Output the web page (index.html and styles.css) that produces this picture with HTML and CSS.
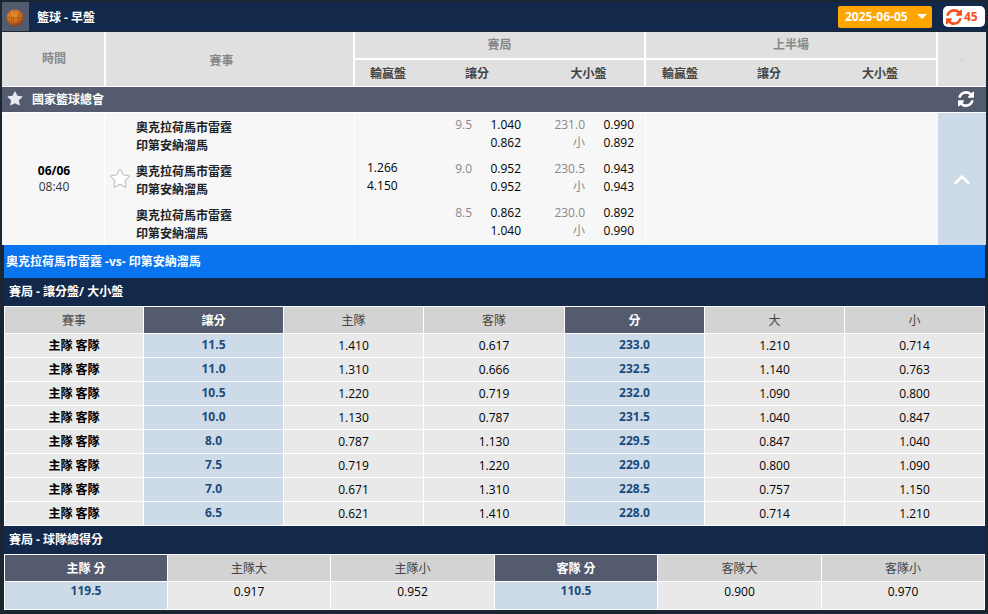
FILE: index.html
```html
<!DOCTYPE html>
<html lang="zh-Hant">
<head>
<meta charset="utf-8">
<title>籃球 - 早盤</title>
<link rel="stylesheet" href="styles.css">
</head>
<body>
<svg class="defs" width="0" height="0">
  <symbol id="refresh" viewBox="0 0 1536 1536"><path fill="currentColor" d="M1511 928q0 5-1 7-64 268-268 434.500t-478 166.500q-146 0-282.500-55t-243.500-157l-129 129q-19 19-45 19t-45-19-19-45v-448q0-26 19-45t45-19h448q26 0 45 19t19 45-19 45l-137 137q71 66 161 102t187 36q134 0 250-65t186-179q11-17 53-117 8-23 30-23h192q13 0 22.500 9.500t9.500 22.500zm25-800v448q0 26-19 45t-45 19h-448q-26 0-45-19t-19-45 19-45l138-138q-148-137-349-137-134 0-250 65t-186 179q-11 17-53 117-8 23-30 23h-199q-13 0-22.500-9.500t-9.500-22.500v-7q65-268 270-434.500t480-166.500q146 0 284 55.500t245 156.500l130-129q19-19 45-19t45 19 19 45z"/></symbol>
  <symbol id="star" viewBox="0 0 1792 1792"><path d="M1728 647q0 22-26 48l-363 354 86 500q1 7 1 20 0 21-10.500 35.500t-30.500 14.500q-19 0-40-12l-449-236-449 236q-22 12-40 12-21 0-31.500-14.500t-10.500-35.500q0-6 2-20l86-500-364-354q-25-27-25-48 0-37 56-46l502-73 225-455q19-41 49-41t49 41l225 455 502 73q56 9 56 46z"/></symbol>
</svg>
<div class="page">
  <header class="topbar">
    <div class="sport-icon">
      <svg width="18" height="18" viewBox="0 0 18 18">
        <defs><radialGradient id="ball" cx="42%" cy="32%" r="72%"><stop offset="0" stop-color="#ee9a34"/><stop offset=".6" stop-color="#c9661a"/><stop offset="1" stop-color="#6f3a1c"/></radialGradient></defs>
        <circle cx="9" cy="9" r="8.500" fill="url(#ball)"/>
        <path d="M9 .5C7 6 7 12 9 17.500M.8 7.500C6 9.500 12 9.500 17.200 7.500M3 3c3.500 3 3.500 9 .5 12.500M15 3c-3.500 3-3.500 9-.5 12.500" fill="none" stroke="#8f4a18" stroke-width=".5"/>
      </svg>
    </div>
    <div class="top-title">籃球 - 早盤</div>
    <div class="date-btn"><span>2025-06-05</span><i class="caret"></i></div>
    <div class="timer-btn"><svg class="timer-icon"><use href="#refresh"/></svg><span>45</span></div>
  </header>

  <div class="head-grid">
    <div class="hc hc-time">時間</div>
    <div class="hc hc-event">賽事</div>
    <div class="hc hc-ft">賽局</div>
    <div class="hc hc-ht">上半場</div>
    <div class="hc hc-plus">+</div>
    <div class="hc hc-sub hc-ft-sub sub-a"><span>輸贏盤</span><span>讓分</span><span>大小盤</span></div>
    <div class="hc hc-sub hc-ht-sub sub-b"><span>輸贏盤</span><span>讓分</span><span>大小盤</span></div>
  </div>

  <div class="league">
    <svg class="league-star"><use href="#star"/></svg>
    <span class="league-name">國家籃球總會</span>
    <svg class="league-refresh"><use href="#refresh"/></svg>
  </div>

  <div class="match">
    <div class="m-time"><b>06/06</b><span>08:40</span></div>
    <div class="m-event">
      <svg class="fav"><use href="#star"/></svg>
      <div class="teams">
        <div class="team-pair"><div>奧克拉荷馬市雷霆</div><div>印第安納溜馬</div></div>
        <div class="team-pair"><div>奧克拉荷馬市雷霆</div><div>印第安納溜馬</div></div>
        <div class="team-pair"><div>奧克拉荷馬市雷霆</div><div>印第安納溜馬</div></div>
      </div>
    </div>
    <div class="m-odds">
      <div class="ml"><div>1.266</div><div>4.150</div></div>
      <div class="lines">
        <div class="line"><span class="mute">9.5</span><span>1.040</span><span class="mute">231.0</span><span>0.990</span><span></span><span>0.862</span><span class="mute">小</span><span>0.892</span></div>
        <div class="line"><span class="mute">9.0</span><span>0.952</span><span class="mute">230.5</span><span>0.943</span><span></span><span>0.952</span><span class="mute">小</span><span>0.943</span></div>
        <div class="line"><span class="mute">8.5</span><span>0.862</span><span class="mute">230.0</span><span>0.892</span><span></span><span>1.040</span><span class="mute">小</span><span>0.990</span></div>
      </div>
    </div>
    <div class="m-half"></div>
    <div class="m-toggle">
      <svg width="18" height="11" viewBox="0 0 18 11"><path d="M2 9.500 9 2.500l7 7" fill="none" stroke="#fff" stroke-width="2.600"/></svg>
    </div>
  </div>

  <section class="detail">
    <div class="detail-title">奧克拉荷馬市雷霆 -vs- 印第安納溜馬</div>
    <div class="section-title sec-1">賽局 - 讓分盤/ 大小盤</div>
    <div class="tbl tbl-7">
      <div class="th">賽事</div><div class="th dark">讓分</div><div class="th">主隊</div><div class="th">客隊</div><div class="th dark">分</div><div class="th">大</div><div class="th">小</div>

      <div class="td strong">主隊 客隊</div><div class="td line-val">11.5</div><div class="td">1.410</div><div class="td">0.617</div><div class="td line-val">233.0</div><div class="td">1.210</div><div class="td">0.714</div>
      <div class="td strong">主隊 客隊</div><div class="td line-val">11.0</div><div class="td">1.310</div><div class="td">0.666</div><div class="td line-val">232.5</div><div class="td">1.140</div><div class="td">0.763</div>
      <div class="td strong">主隊 客隊</div><div class="td line-val">10.5</div><div class="td">1.220</div><div class="td">0.719</div><div class="td line-val">232.0</div><div class="td">1.090</div><div class="td">0.800</div>
      <div class="td strong">主隊 客隊</div><div class="td line-val">10.0</div><div class="td">1.130</div><div class="td">0.787</div><div class="td line-val">231.5</div><div class="td">1.040</div><div class="td">0.847</div>
      <div class="td strong">主隊 客隊</div><div class="td line-val">8.0</div><div class="td">0.787</div><div class="td">1.130</div><div class="td line-val">229.5</div><div class="td">0.847</div><div class="td">1.040</div>
      <div class="td strong">主隊 客隊</div><div class="td line-val">7.5</div><div class="td">0.719</div><div class="td">1.220</div><div class="td line-val">229.0</div><div class="td">0.800</div><div class="td">1.090</div>
      <div class="td strong">主隊 客隊</div><div class="td line-val">7.0</div><div class="td">0.671</div><div class="td">1.310</div><div class="td line-val">228.5</div><div class="td">0.757</div><div class="td">1.150</div>
      <div class="td strong">主隊 客隊</div><div class="td line-val">6.5</div><div class="td">0.621</div><div class="td">1.410</div><div class="td line-val">228.0</div><div class="td">0.714</div><div class="td">1.210</div>
    </div>
    <div class="section-title sec-2">賽局 - 球隊總得分</div>
    <div class="tbl tbl-6">
      <div class="th dark">主隊 分</div><div class="th">主隊大</div><div class="th">主隊小</div><div class="th dark">客隊 分</div><div class="th">客隊大</div><div class="th">客隊小</div>
      <div class="td td-tall line-val">119.5</div><div class="td td-tall">0.917</div><div class="td td-tall">0.952</div><div class="td td-tall line-val">110.5</div><div class="td td-tall">0.900</div><div class="td td-tall">0.970</div>
    </div>
  </section>
</div>
</body>
</html>
```
FILE: styles.css
```css
* { box-sizing: border-box; }
html, body { margin: 0; padding: 0; }
body {
  width: 988px;
  height: 614px;
  overflow: hidden;
  background: #1a2733;
  font-family: "Open Sans", "Noto Sans CJK TC", sans-serif;
  font-size: 12px;
  color: #000;
}
.defs { position: absolute; }
.page { padding: 2px 2px 0 2px; }

.topbar {
  display: flex;
  align-items: center;
  height: 29px;
  padding-right: 1px;
  background: #13294b;
  color: #fff;
}
.sport-icon {
  width: 27px;
  height: 29px;
  padding: 2px 2px 0 0;
  background: #545b6e;
  display: flex;
  align-items: center;
  justify-content: center;
}
.top-title { margin-left: 8px; font-weight: 700; flex: 1; }
.date-btn {
  width: 94px;
  height: 22px;
  background: #ffa500;
  border-radius: 2px;
  color: #fff;
  font-weight: 700;
  display: flex;
  align-items: center;
  padding-left: 7px;
  gap: 9px;
}
.caret {
  width: 0;
  height: 0;
  border-left: 5px solid transparent;
  border-right: 5px solid transparent;
  border-top: 5px solid #fff;
}
.timer-btn {
  width: 42px;
  height: 21px;
  margin-left: 11px;
  background: #fff;
  border-radius: 5px;
  color: #f4511e;
  font-weight: 700;
  display: flex;
  align-items: center;
  padding-left: 3px;
  gap: 2px;
}
.timer-icon { width: 16px; height: 16px; color: #f4511e; }

.head-grid {
  display: grid;
  grid-template-columns: 102px 247px 289px 290px 48px;
  grid-template-rows: 26px 26px;
  gap: 2px;
  margin-top: 1px;
  background: #fff;
  padding-bottom: 1px;
  color: #888;
  font-weight: 700;
}
.hc {
  background: #e0e0e0;
  display: flex;
  align-items: center;
  justify-content: center;
}
.hc-time { grid-column: 1; grid-row: 1 / 3; padding: 0 0 2px 2px; }
.hc-event { grid-column: 2; grid-row: 1 / 3; padding: 2px 16px 0 0; }
.hc-ft { grid-column: 3; grid-row: 1; padding-bottom: 2px; }
.hc-ht { grid-column: 4; grid-row: 1; padding-bottom: 2px; }
.hc-plus { grid-column: 5; grid-row: 1 / 3; font-weight: 400; color: #d4d4d4; }
.hc-sub { color: #444; justify-content: flex-start; grid-row: 2; }
.hc-sub span { text-align: center; }
.hc-ft-sub { grid-column: 3; }
.hc-ht-sub { grid-column: 4; }
.sub-a span:nth-child(1) { width: 66px; }
.sub-a span:nth-child(2) { width: 112px; }
.sub-a span:nth-child(3) { width: 111px; }
.sub-b span:nth-child(1) { width: 68px; }
.sub-b span:nth-child(2) { width: 110px; }
.sub-b span:nth-child(3) { width: 112px; }

.league {
  height: 25px;
  padding: 0 12px 1px 5px;
  background: #545b6e;
  color: #fff;
  display: flex;
  align-items: center;
}
.league-star { width: 16px; height: 16px; fill: #e8e8ee; }
.league-name { margin-left: 9px; font-weight: 700; flex: 1; }
.league-refresh { width: 16px; height: 16px; color: #fff; }

.match {
  display: grid;
  grid-template-columns: 103px 250px 291px 292px 48px;
  grid-template-rows: 132px;
  height: 133px;
  background: #fff;
  padding-top: 1px;
}
.m-time, .m-event, .m-odds, .m-half { background: #f7f7f7; }
.m-time, .m-event, .m-odds { border-right: 1px solid #fff; }
.m-time {
  display: flex;
  flex-direction: column;
  align-items: center;
  justify-content: center;
  line-height: 16px;
  padding: 0 0 1px 2px;
  color: #333;
}
.m-time b { color: #000; }
.m-event { display: flex; align-items: flex-start; padding-left: 5px; }
.fav {
  width: 20px;
  height: 20px;
  fill: #fff;
  stroke: #bbb;
  stroke-width: 90;
  flex: none;
  margin-top: 56px;
}
.teams { margin-left: 6px; font-weight: 700; color: #222; padding-top: 6px; }
.team-pair { height: 44px; }
.team-pair:last-child { height: 36px; }
.team-pair div { height: 18px; line-height: 18px; }
.m-odds { display: flex; padding-top: 3px; }
.ml {
  width: 66px;
  padding: 43px 0 0 12px;
  line-height: 18px;
}
.lines { flex: 1; }
.line {
  display: grid;
  grid-template-columns: 51px 49px 64px 49px;
  grid-auto-rows: 18px;
  height: 44px;
  line-height: 18px;
  text-align: right;
}
.line:last-child { height: 36px; }
.mute { color: #888; }
.m-toggle {
  background: #cddbe8;
  display: flex;
  align-items: center;
  justify-content: center;
}

.detail { margin: 0 0 0 2px; width: 981px; }
.detail-title {
  height: 33px;
  line-height: 33px;
  background: #0a74ee;
  color: #fff;
  font-weight: 700;
  padding-left: 2px;
}
.section-title {
  background: #13294b;
  color: #fff;
  font-weight: 700;
  padding-left: 5px;
}
.sec-1 { height: 28px; line-height: 27px; }
.sec-2 { height: 28px; line-height: 28px; }
.tbl {
  display: grid;
  gap: 1px;
  background: #fff;
  padding: 1px;
}
.tbl-7 {
  grid-template-columns: 138px 139px 139px 140px 139px 139px 139px;
  grid-template-rows: 26px;
  grid-auto-rows: 23px;
}
.tbl-6 {
  grid-template-columns: 162px 162px 163px 162px 163px 162px;
  grid-template-rows: 26px 27px;
}
.th, .td {
  display: flex;
  align-items: center;
  justify-content: center;
}
.th { background: #d3d3d3; color: #444; }
.th.dark { background: #545b6e; color: #fff; font-weight: 700; }
.td { background: #e9e9e9; color: #000; padding-bottom: 1px; }
.td.strong { font-weight: 700; }
.td.line-val { background: #cddbe8; color: #1b4a7a; font-weight: 700; padding-bottom: 2px; }
.td.td-tall { align-items: flex-start; padding: 1px 0 0; }
.td.td-tall.line-val { padding: 0; }
```
